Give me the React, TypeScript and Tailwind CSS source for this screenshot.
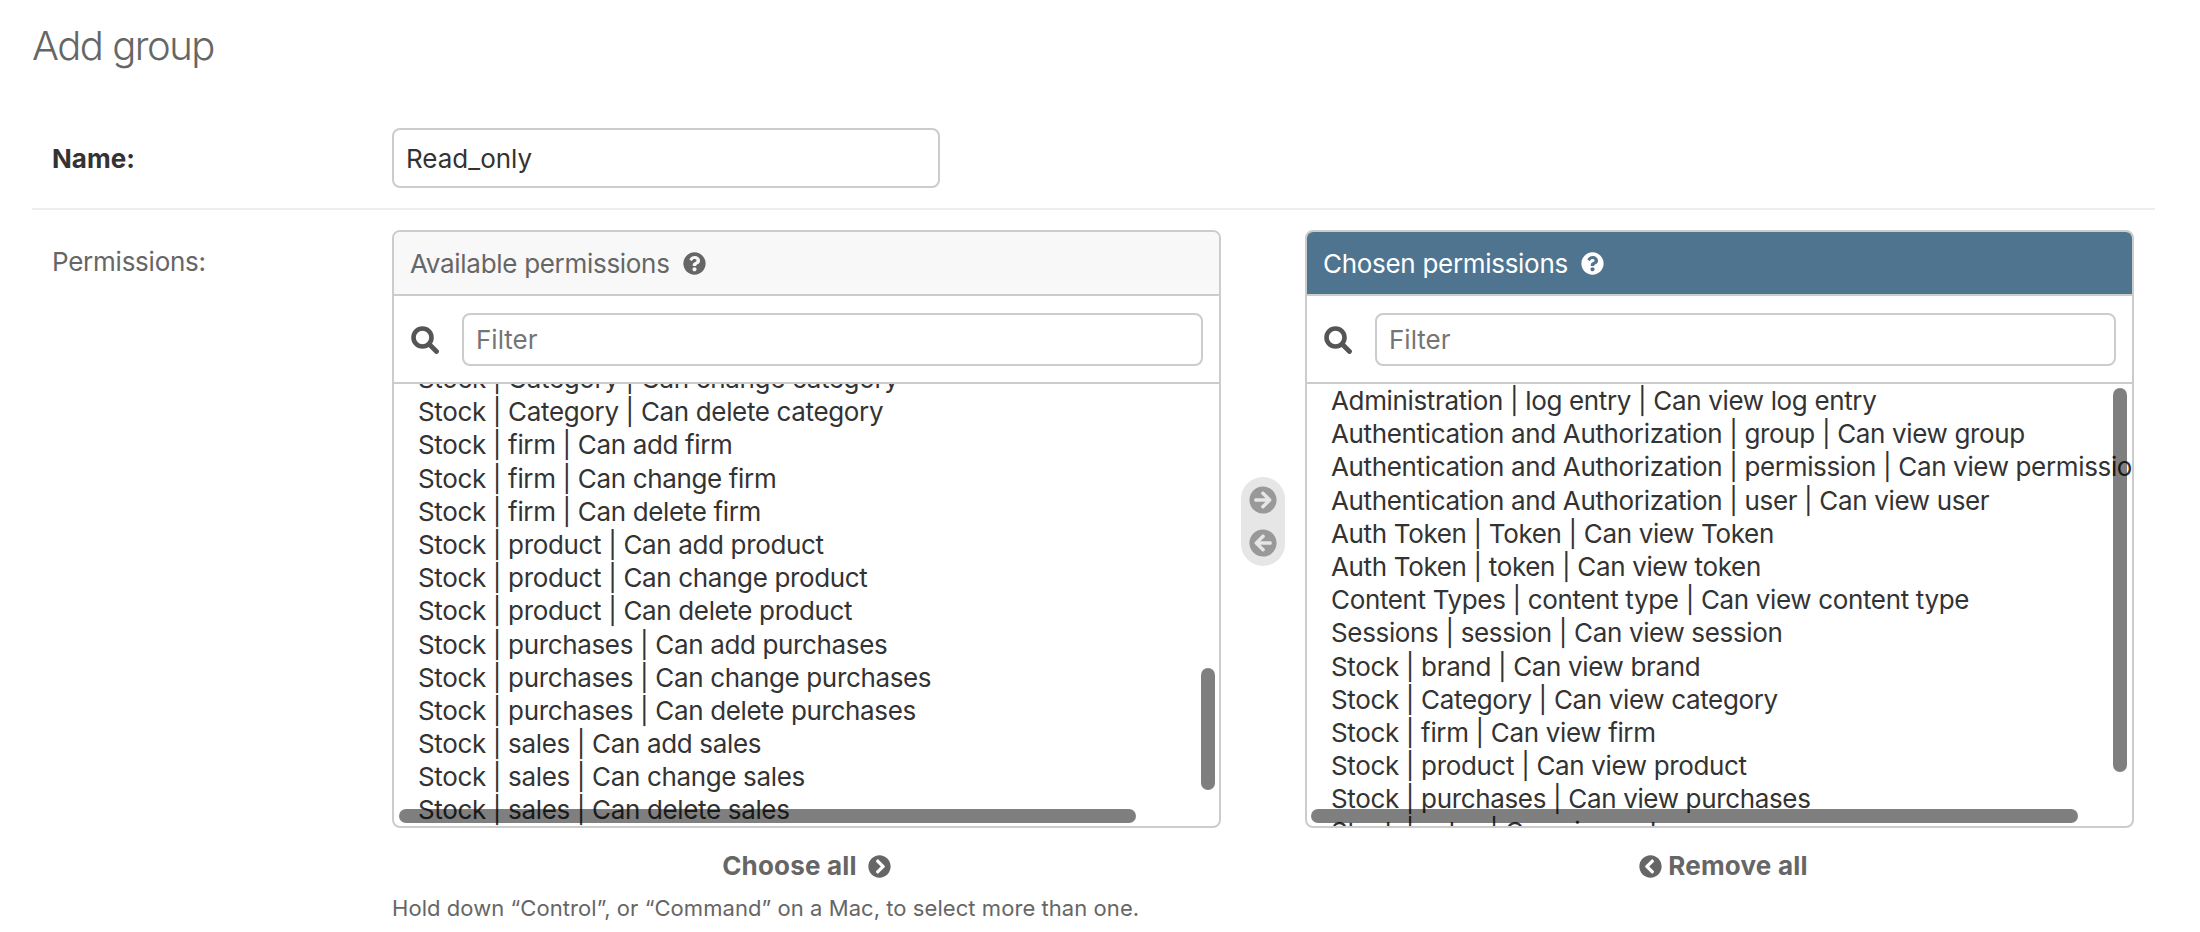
import { FaArrowCircleLeft, FaArrowCircleRight, FaChevronCircleLeft, FaChevronCircleRight, FaQuestionCircle } from 'react-icons/fa';

const available = [
  'Stock | Category | Can change category',
  'Stock | Category | Can delete category',
  'Stock | firm | Can add firm',
  'Stock | firm | Can change firm',
  'Stock | firm | Can delete firm',
  'Stock | product | Can add product',
  'Stock | product | Can change product',
  'Stock | product | Can delete product',
  'Stock | purchases | Can add purchases',
  'Stock | purchases | Can change purchases',
  'Stock | purchases | Can delete purchases',
  'Stock | sales | Can add sales',
  'Stock | sales | Can change sales',
  'Stock | sales | Can delete sales',
];

const chosen = [
  'Administration | log entry | Can view log entry',
  'Authentication and Authorization | group | Can view group',
  'Authentication and Authorization | permission | Can view permission',
  'Authentication and Authorization | user | Can view user',
  'Auth Token | Token | Can view Token',
  'Auth Token | token | Can view token',
  'Content Types | content type | Can view content type',
  'Sessions | session | Can view session',
  'Stock | brand | Can view brand',
  'Stock | Category | Can view category',
  'Stock | firm | Can view firm',
  'Stock | product | Can view product',
  'Stock | purchases | Can view purchases',
  'Stock | sales | Can view sales',
];

function SearchIcon() {
  return (
    <svg viewBox="0 0 30 30" className="w-[30px] h-[30px] shrink-0 text-[#555]" fill="none" stroke="currentColor">
      <circle cx="12.5" cy="13.5" r="9" strokeWidth="4.6" />
      <path d="M19.5 20.5l7 7" strokeWidth="4.8" strokeLinecap="round" />
    </svg>
  );
}

function FilterRow() {
  return (
    <div className="h-[88px] shrink-0 flex items-center pl-[16px] pr-[16px] gap-[22px] border-b-2 border-[#ccc]">
      <SearchIcon />
      <input
        readOnly
        placeholder="Filter"
        className="flex-1 min-w-0 h-[53px] px-[12px] border-2 border-[#ccc] rounded-lg text-[26px] outline-none placeholder:text-[#757575]"
      />
    </div>
  );
}

function OptionList({ items, offset }: { items: string[]; offset: string }) {
  return (
    <div className="relative flex-1 min-h-0 overflow-hidden">
      <div className={`pl-[24px] whitespace-nowrap text-[#333] ${offset}`}>
        {items.map((item) => (
          <div key={item} className="h-[33.2px] leading-[33.2px] text-[26px] tracking-[-0.35px]">
            {item}
          </div>
        ))}
      </div>
    </div>
  );
}

export default function App() {
  return (
    <div className="h-[932px] overflow-hidden bg-white font-['Inter','Liberation_Sans',sans-serif] text-[#333]">
      <div className="pl-[32px] pr-[45px]">
        <h1 className="pt-[22px] h-[128px] text-[40px] leading-[48px] font-light tracking-[-1.5px] text-[#666]">Add group</h1>

        <div className="flex h-[82px] pl-[20px] border-b-2 border-[#eee]">
          <label className="w-[340px] h-[60px] flex items-center text-[26px] font-bold text-[#333]">Name:</label>
          <input
            readOnly
            value="Read_only"
            className="w-[548px] h-[60px] px-[12px] border-2 border-[#ccc] rounded-lg text-[26px] text-[#333] outline-none"
          />
        </div>

        <div className="flex pl-[20px] pt-[20px]">
          <label className="w-[340px] pt-[15px] text-[26px] leading-[33px] tracking-[-0.25px] text-[#666]">Permissions:</label>
          <div>
            <div className="flex">
              <div className="w-[829px]">
                <div className="relative h-[598px] flex flex-col border-2 border-[#ccc] rounded-lg overflow-hidden">
                  <div className="h-[64px] shrink-0 flex items-center gap-[13px] pl-[16px] bg-[#f8f8f8] border-b-2 border-[#ccc] text-[26px] tracking-[-0.3px] text-[#666]">
                    Available permissions
                    <FaQuestionCircle className="w-[23px] h-[23px] text-[#666]" />
                  </div>
                  <FilterRow />
                  <OptionList items={available} offset="-mt-[22px]" />
                  <div className="absolute left-[5px] top-[577px] w-[737px] h-[14px] rounded-full bg-black/50" />
                  <div className="absolute left-[807px] top-[436px] w-[14px] h-[122px] rounded-full bg-black/50" />
                </div>
                <div className="h-[67px] pt-[25px] flex justify-center gap-[11px] text-[26px] leading-[26px] font-bold tracking-[0.2px] text-[#666]">
                  Choose all
                  <FaChevronCircleRight className="w-[23px] h-[23px] mt-[2px]" />
                </div>
              </div>

              <div className="w-[84px] pt-[247px] flex justify-center">
                <div className="w-[44px] h-[89px] flex flex-col items-center justify-center gap-[15px] rounded-full bg-[#e6e6e6] text-[#999]">
                  <FaArrowCircleRight className="w-[28px] h-[28px]" />
                  <FaArrowCircleLeft className="w-[28px] h-[28px]" />
                </div>
              </div>

              <div className="w-[829px]">
                <div className="relative h-[598px] flex flex-col border-2 border-[#ccc] rounded-lg overflow-hidden">
                  <div className="h-[64px] shrink-0 flex items-center gap-[13px] pl-[16px] bg-[#4f7490] border-b-2 border-[#ccc] text-[26px] tracking-[-0.3px] text-white">
                    Chosen permissions
                    <FaQuestionCircle className="w-[23px] h-[23px] text-white" />
                  </div>
                  <FilterRow />
                  <OptionList items={chosen} offset="" />
                  <div className="absolute left-[4px] top-[577px] w-[767px] h-[14px] rounded-full bg-black/50" />
                  <div className="absolute left-[806px] top-[156px] w-[14px] h-[384px] rounded-full bg-black/50" />
                </div>
                <div className="h-[67px] pt-[25px] pl-[8px] flex justify-center gap-[6px] text-[26px] leading-[26px] font-bold tracking-[0.2px] text-[#666]">
                  <FaChevronCircleLeft className="w-[23px] h-[23px] mt-[2px]" />
                  Remove all
                </div>
              </div>
            </div>
            <p className="text-[22px] leading-[26px] tracking-[0.06px] text-[#666]">Hold down “Control”, or “Command” on a Mac, to select more than one.</p>
          </div>
        </div>
      </div>
    </div>
  );
}
